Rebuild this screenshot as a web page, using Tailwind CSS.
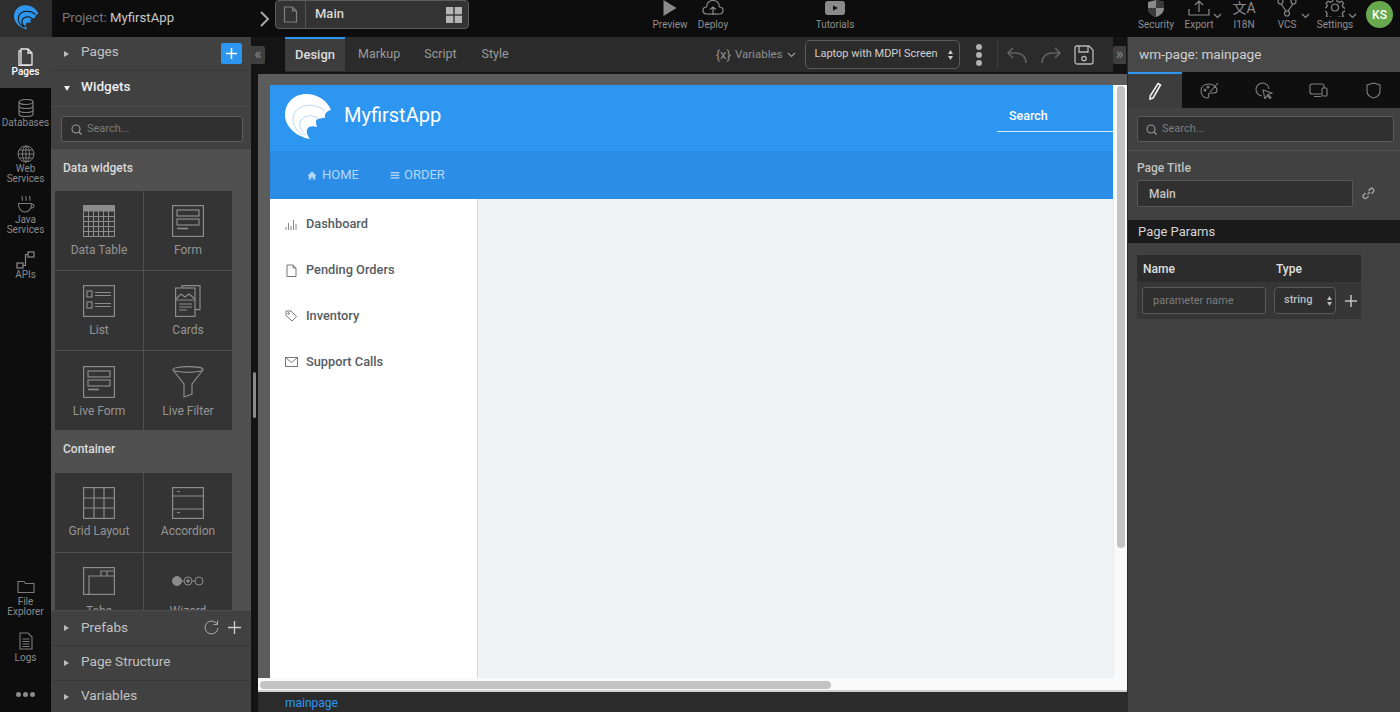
<!DOCTYPE html>
<html>
<head>
    <title>MyfirstApp - Studio</title>
    <script src="https://cdn.jsdelivr.net/npm/@tailwindcss/browser@4"></script>
</head>
<body class="bg-[#0c0c0c] font-['Roboto',sans-serif] overflow-hidden">
<div class="w-[1400px] h-[712px] flex flex-col overflow-hidden">

    <!-- top bar -->
    <header class="h-[37px] shrink-0 flex bg-[#0d0d0d] text-[#8f8f8f]">
        <div class="w-[52px] shrink-0 h-full bg-[#2e2e2e] flex items-center justify-center pb-[3px]">
            <svg width="25" height="25" viewBox="0 0 47 46"><path fill="#2f96ee" d="M46 16C42 6 32 0 21 0 9 0 0 9 0 21c0 12 12 22 25 24-3-4-5-9-1-12 2-1 5-1 8 0-1-4-2-7 1-8 2-1 5-1 7-1-1-3 1-7 6-8z"/><path fill="none" stroke="#0d0d0d" stroke-width="2" d="M40 17C30 8 14 10 9 20c-3 9 2 17 9 21M33 24c-9-5-17-1-18 5-1 5 2 9 6 12"/></svg>
        </div>
        <div class="w-[207px] shrink-0 pl-[10px] flex items-center text-[13.200px] pb-[1px]"><span class="text-[#777]">Project:&nbsp;</span><span class="text-[#c9c9c9]">MyfirstApp</span></div>
        <div class="w-[16px] shrink-0 flex items-center justify-start">
            <svg width="12" height="18" viewBox="0 0 12 18" fill="none" stroke="#a8a8a8" stroke-width="2"><path d="M2 2l7 7-7 7"/></svg>
        </div>
        <div class="w-[194px] shrink-0 h-[29px] flex rounded-[4px] border border-[#5c5c5c] bg-[#333]">
            <div class="w-[30px] border-r border-[#555] flex items-center justify-center">
                <svg width="15" height="17" viewBox="0 0 15 17" fill="none" stroke="#808080" stroke-width="1.200"><path d="M1.500 1h8l4 4v11h-12zM9.500 1v4h4"/></svg>
            </div>
            <div class="flex-1 pl-[9px] flex items-center text-[13px] font-medium text-[#d8d8d8] pb-[2px]">Main</div>
            <div class="w-[28px] flex items-center justify-center">
                <svg width="16" height="16" viewBox="0 0 16 16" fill="#b5b5b5"><rect width="7.300" height="7.300"/><rect x="8.700" width="7.300" height="7.300"/><rect y="8.700" width="7.300" height="7.300"/><rect x="8.700" y="8.700" width="7.300" height="7.300"/></svg>
            </div>
        </div>
        <div class="ml-[179px] w-[44px] shrink-0 flex flex-col items-center text-[10px]">
            <svg width="16" height="17" viewBox="0 0 16 17" fill="#8a8a8a"><path d="M1.500 0l13 8-13 8z"/></svg>
            <span class="mt-[1px] leading-[13px]">Preview</span>
        </div>
        <div class="w-[42px] shrink-0 flex flex-col items-center text-[10px]">
            <svg width="22" height="17" viewBox="0 0 22 17" fill="none" stroke="#8a8a8a" stroke-width="1.200"><path d="M6 14H4.500C2.500 14 1 12.500 1 10.500S2.500 7 4.500 7C5 3 7.500.5 11 .5s6 2.500 6.500 6.500c2 0 3.500 1.500 3.500 3.500S19.500 14 17.500 14H16M11 15V7M8 9.500L11 7l3 2.500"/><path d="M6 14h10"/></svg>
            <span class="mt-[1px] leading-[13px]">Deploy</span>
        </div>
        <div class="ml-[76px] w-[50px] shrink-0 flex flex-col items-center text-[10px]">
            <svg width="20" height="17" viewBox="0 0 20 17"><rect y="1" width="20" height="14" rx="3" fill="#8a8a8a"/><path d="M8 5.500l5 2.500-5 2.500z" fill="#0d0d0d"/></svg>
            <span class="mt-[1px] leading-[13px]">Tutorials</span>
        </div>
        <div class="ml-[275px] w-[42px] shrink-0 flex flex-col items-center text-[10px]">
            <svg width="18" height="17" viewBox="0 0 18 17"><path d="M9 0l8 2v6c0 5-4 7.500-8 9-4-1.500-8-4-8-9V2z" fill="#8a8a8a"/><path d="M9 0v8h8V2zM1 8h8v9c-4-1.500-8-4-8-9z" fill="#3a3a3a"/></svg>
            <span class="mt-[1px] leading-[13px]">Security</span>
        </div>
        <div class="w-[44px] shrink-0 relative flex flex-col items-center text-[10px]">
            <svg width="22" height="17" viewBox="0 0 22 17" fill="none" stroke="#8a8a8a" stroke-width="1.200"><path d="M1 9v6h20V9M11 12V1M7 5l4-4 4 4"/></svg>
            <span class="mt-[1px] leading-[13px]">Export</span>
            <svg class="absolute right-[-1px] top-[13px]" width="9" height="6" viewBox="0 0 9 6" fill="none" stroke="#8a8a8a" stroke-width="1.200"><path d="M1 1l3.500 3.500L8 1"/></svg>
        </div>
        <div class="ml-[2px] w-[42px] shrink-0 flex flex-col items-center text-[10px]">
            <span class="h-[17px] leading-[17px] text-[14px] text-[#8a8a8a] font-['Roboto','Noto_Sans_CJK_SC',sans-serif]">文A</span>
            <span class="mt-[1px] leading-[13px]">I18N</span>
        </div>
        <div class="w-[44px] shrink-0 relative flex flex-col items-center text-[10px]">
            <svg width="20" height="17" viewBox="0 0 20 17" fill="none" stroke="#8a8a8a" stroke-width="1.200"><circle cx="3.500" cy="1.500" r="2.500"/><circle cx="16.500" cy="1.500" r="2.500"/><circle cx="10" cy="13.500" r="2.500"/><path d="M4 4l5 7M16 4l-5 7"/></svg>
            <span class="mt-[1px] leading-[13px]">VCS</span>
            <svg class="absolute right-[-1px] top-[13px]" width="9" height="6" viewBox="0 0 9 6" fill="none" stroke="#8a8a8a" stroke-width="1.200"><path d="M1 1l3.500 3.500L8 1"/></svg>
        </div>
        <div class="ml-[3px] w-[46px] shrink-0 relative flex flex-col items-center text-[10px]">
            <svg width="20" height="17" viewBox="0 0 20 17" fill="none" stroke="#8a8a8a" stroke-width="1.200"><path d="M8.500-1h3l.6 2.400 2.200 1 2.200-1.200 2 2-1.200 2.200 1 2.200 2 .6v3l-2 .6-1 2.200 1 2-2 2-2.200-1-2.200 1-.6 1.500h-3l-.6-1.500-2.200-1-2.200 1-2-2 1-2-1-2.200-2-.6v-3l2-.6 1-2.200-1.200-2.200 2-2 2.200 1.200 2.200-1z"/><circle cx="10" cy="7.500" r="3.500"/></svg>
            <span class="mt-[1px] leading-[13px]">Settings</span>
            <svg class="absolute right-[1px] top-[13px]" width="9" height="6" viewBox="0 0 9 6" fill="none" stroke="#8a8a8a" stroke-width="1.200"><path d="M1 1l3.500 3.500L8 1"/></svg>
        </div>
        <div class="ml-[8px] mt-[1px] w-[27px] shrink-0 h-[27px] rounded-full bg-[#67a94c] text-white text-[12px] font-medium flex items-center justify-center">KS</div>
    </header>

    <div class="flex-1 flex min-h-0">

        <!-- icon rail -->
        <nav class="w-[51px] shrink-0 bg-[#0d0d0d] flex flex-col text-[10px] leading-[10px] text-[#8b8b8b] text-center">
            <div class="h-[51px] bg-[#414141] text-white font-medium flex flex-col items-center pt-[11px]">
                <svg width="17" height="18" viewBox="0 0 17 18" fill="none" stroke="#e8e8e8" stroke-width="1.300"><path d="M4 1h7l4 4v12H4zM11 1v4h4M4 3H2v14.500h11"/></svg>
                <span class="mt-[1px]">Pages</span>
            </div>
            <div class="h-[46px] flex flex-col items-center pt-[11px]">
                <svg width="16" height="18" viewBox="0 0 16 18" fill="none" stroke="#7c7c7c" stroke-width="1.200"><ellipse cx="8" cy="3" rx="7" ry="2.500"/><path d="M1 3v12c0 1.400 3 2.500 7 2.500s7-1.100 7-2.500V3M1 7c0 1.400 3 2.500 7 2.500S15 8.400 15 7M1 11c0 1.400 3 2.500 7 2.500s7-1.100 7-2.500"/></svg>
                <span class="mt-[1px]">Databases</span>
            </div>
            <div class="h-[51px] flex flex-col items-center pt-[11px]">
                <svg width="18" height="18" viewBox="0 0 18 18" fill="none" stroke="#7c7c7c" stroke-width="1"><circle cx="9" cy="9" r="8"/><ellipse cx="9" cy="9" rx="3.500" ry="8"/><path d="M9 1v16M1 9h16M2.200 5h13.600M2.200 13h13.600"/></svg>
                <span class="mt-[1px]">Web<br>Services</span>
            </div>
            <div class="h-[51px] flex flex-col items-center pt-[10px]">
                <svg width="20" height="19" viewBox="0 0 20 20" fill="none" stroke="#7c7c7c" stroke-width="1.100"><path d="M6 1c-1 1.500 1 2.500 0 5M10 1c-1 1.500 1 2.500 0 5M14 1c-1 1.500 1 2.500 0 5M2 9h14c0 5-3 9-7 9s-7-4-7-9zM16 10h1.500c1.500 0 1.500 3.500-2 4"/></svg>
                <span class="mt-[1px]">Java<br>Services</span>
            </div>
            <div class="h-[50px] flex flex-col items-center pt-[15px]">
                <svg width="19" height="19" viewBox="0 0 19 19" fill="none" stroke="#8b8b8b" stroke-width="1.200"><rect x="12" y="1" width="6" height="5" /><rect x="1" y="12" width="6" height="5"/><path d="M12 3.500H9.500v11H7"/></svg>
                <span>APIs</span>
            </div>
            <div class="mt-auto h-[52px] flex flex-col items-center">
                <svg width="18" height="14" viewBox="0 0 18 14" fill="none" stroke="#7c7c7c" stroke-width="1.100"><path d="M1 12.500V1.500h6l1.500 2H17v9z"/></svg>
                <span class="mt-[3px]">File<br>Explorer</span>
            </div>
            <div class="h-[38px] flex flex-col items-center">
                <svg width="14" height="18" viewBox="0 0 14 18" fill="none" stroke="#7c7c7c" stroke-width="1.100"><path d="M1 1h8l4 4v12H1zM3.500 7h7M3.500 9.500h7M3.500 12h7M3.500 14.500h7"/></svg>
                <span class="mt-[3px]">Logs</span>
            </div>
            <div class="h-[42px] flex items-start justify-center gap-[2px] pt-[22px]">
                <span class="w-[5px] h-[5px] rounded-full bg-[#8b8b8b]"></span><span class="w-[5px] h-[5px] rounded-full bg-[#8b8b8b]"></span><span class="w-[5px] h-[5px] rounded-full bg-[#8b8b8b]"></span>
            </div>
        </nav>

        <!-- widgets panel -->
        <aside class="w-[200px] shrink-0 bg-[#414141] flex flex-col text-[#c2c2c2]">
            <div class="h-[34px] shrink-0 flex items-center pl-[13px] pr-[9px] border-b border-[#383838] text-[13.600px]">
                <span class="w-0 h-0 border-y-[3.500px] border-y-transparent border-l-[5px] border-l-[#bdbdbd] mr-[12px]"></span>
                <span class="flex-1 pb-[5px]">Pages</span>
                <span class="w-[21px] h-[21px] rounded-[2px] bg-[#2d96f0] flex items-center justify-center">
                    <svg width="13" height="13" viewBox="0 0 13 13" stroke="#fff" stroke-width="1.500"><path d="M6.500 1v11M1 6.500h11"/></svg>
                </span>
            </div>
            <div class="h-[35px] shrink-0 flex items-center pl-[13px] text-[13.600px] font-medium text-[#eee]">
                <span class="w-0 h-0 border-x-[3.500px] border-x-transparent border-t-[5px] border-t-[#eee] mr-[11px]"></span>
                <span class="pb-[5px]">Widgets</span>
            </div>
            <div class="h-[44px] shrink-0 border-t border-b border-[#4d4d4d] px-[10px] pt-[9px]">
                <div class="h-[26px] w-[182px] rounded-[3px] border border-[#5e5e5e] bg-[#303030] flex items-center pl-[9px] text-[11px] text-[#7d7d7d]">
                    <svg class="mr-[5px]" width="11" height="11" viewBox="0 0 11 11" fill="none" stroke="#9a9a9a" stroke-width="1.100"><circle cx="5" cy="5" r="4"/><path d="M8 8l2.500 2.500"/></svg>
                    Search...
                </div>
            </div>

            <!-- widget list -->
            <div class="flex-1 min-h-0 overflow-hidden bg-[#505050]">
                <div class="h-[41px] pl-[12px] pt-[9px] text-[12px] font-medium text-[#dcdcdc]">Data widgets</div>
                <div class="grid grid-cols-[88px_88px] gap-[1px] pl-[4px] text-[12px] text-[#959595] text-center">
                    <div class="h-[79px] bg-[#343434] flex flex-col items-center pt-[14px]">
                        <svg width="32" height="32" viewBox="0 0 32 32" fill="none" stroke="#8c8c8c" stroke-width="1"><rect x=".5" y=".5" width="31" height="31"/><rect x="0" y="0" width="32" height="6" fill="#8c8c8c"/><path d="M0 11.500h32M0 16.500h32M0 21.500h32M0 26.500h32M5.500 6v26M10.500 6v26M15.500 6v26M20.500 6v26M25.500 6v26"/></svg>
                        <span class="mt-[6px] leading-[14px]">Data Table</span>
                    </div>
                    <div class="h-[79px] bg-[#343434] flex flex-col items-center pt-[14px]">
                        <svg width="32" height="32" viewBox="0 0 32 32" fill="none" stroke="#8c8c8c" stroke-width="1.200"><rect x=".6" y=".6" width="30.800" height="30.800"/><rect x="5" y="5" width="22" height="6"/><rect x="5" y="14" width="22" height="6"/><path d="M5 23.500h11" stroke-width="1.600"/></svg>
                        <span class="mt-[6px] leading-[14px]">Form</span>
                    </div>
                    <div class="h-[79px] bg-[#343434] flex flex-col items-center pt-[14px]">
                        <svg width="32" height="32" viewBox="0 0 32 32" fill="none" stroke="#8c8c8c" stroke-width="1.200"><rect x=".6" y=".6" width="30.800" height="30.800"/><rect x="4" y="6" width="5" height="6"/><rect x="4" y="17" width="5" height="6"/><path d="M12 7.500h16M12 10.500h16M12 18.500h16M12 21.500h16"/></svg>
                        <span class="mt-[6px] leading-[14px]">List</span>
                    </div>
                    <div class="h-[79px] bg-[#343434] flex flex-col items-center pt-[14px]">
                        <svg width="26" height="32" viewBox="0 0 26 32" fill="none" stroke="#8c8c8c" stroke-width="1.200"><path d="M7 3V.6h18v24h-5"/><rect x=".6" y="3" width="19.400" height="28.400"/><path d="M1 14l5-5 4 3 4-3 6 5M1 15h19M4 19h13M4 22h13M4 25h8"/></svg>
                        <span class="mt-[6px] leading-[14px]">Cards</span>
                    </div>
                    <div class="h-[79px] bg-[#343434] flex flex-col items-center pt-[15px]">
                        <svg width="32" height="32" viewBox="0 0 32 32" fill="none" stroke="#8c8c8c" stroke-width="1.200"><rect x=".6" y=".6" width="30.800" height="30.800"/><rect x="5" y="5" width="22" height="6"/><rect x="5" y="14" width="22" height="6"/><path d="M5 23.500h11" stroke-width="1.600"/></svg>
                        <span class="mt-[6px] leading-[14px]">Live Form</span>
                    </div>
                    <div class="h-[79px] bg-[#343434] flex flex-col items-center pt-[15px]">
                        <svg width="32" height="32" viewBox="0 0 32 32" fill="none" stroke="#8c8c8c" stroke-width="1.200"><ellipse cx="16" cy="3.500" rx="15" ry="2.800"/><path d="M1 4l11 14v13l8-3V18L31 4"/></svg>
                        <span class="mt-[6px] leading-[14px]">Live Filter</span>
                    </div>
                </div>
                <div class="h-[43px] pl-[12px] pt-[10px] text-[12px] font-medium text-[#dcdcdc]">Container</div>
                <div class="grid grid-cols-[88px_88px] gap-[1px] pl-[4px] text-[12px] text-[#959595] text-center">
                    <div class="h-[79px] bg-[#343434] flex flex-col items-center pt-[14px]">
                        <svg width="32" height="32" viewBox="0 0 32 32" fill="none" stroke="#8c8c8c" stroke-width="1.200"><rect x=".6" y=".6" width="30.800" height="30.800"/><path d="M0 11h32M0 21h32M11 0v32M21 0v32"/></svg>
                        <span class="mt-[5px] leading-[14px]">Grid Layout</span>
                    </div>
                    <div class="h-[79px] bg-[#343434] flex flex-col items-center pt-[14px]">
                        <svg width="32" height="32" viewBox="0 0 32 32" fill="none" stroke="#8c8c8c" stroke-width="1.200"><rect x=".6" y=".6" width="30.800" height="30.800"/><path d="M0 9h32M0 22h32M5 4.500h3M5 25.500h3"/></svg>
                        <span class="mt-[5px] leading-[14px]">Accordion</span>
                    </div>
                    <div class="h-[79px] bg-[#343434] flex flex-col items-center pt-[14px]">
                        <svg width="32" height="28" viewBox="0 0 32 28" fill="none" stroke="#8c8c8c" stroke-width="1.200"><rect x=".6" y=".6" width="30.800" height="26.800"/><path d="M6 27V9h26M18 9V4h14M24 4v5"/></svg>
                        <span class="mt-[9px] leading-[14px]">Tabs</span>
                    </div>
                    <div class="h-[79px] bg-[#343434] flex flex-col items-center pt-[14px]">
                        <svg class="my-[9px]" width="32" height="10" viewBox="0 0 32 10" fill="none" stroke="#8c8c8c" stroke-width="1"><circle cx="5" cy="5" r="4.500" fill="#8c8c8c"/><circle cx="16" cy="5" r="4"/><circle cx="16" cy="5" r="1.300" fill="#8c8c8c"/><circle cx="27" cy="5" r="4"/><path d="M9.500 5H12M20 5h3"/></svg>
                        <span class="mt-[9px] leading-[14px]">Wizard</span>
                    </div>
                </div>
            </div>

            <div class="h-[35px] shrink-0 flex items-center pl-[13px] pr-[9px] border-t border-[#4d4d4d] text-[13.600px] bg-[#414141]">
                <span class="w-0 h-0 border-y-[3.500px] border-y-transparent border-l-[5px] border-l-[#bdbdbd] mr-[12px]"></span>
                <span class="flex-1 pb-[1px]">Prefabs</span>
                <svg class="mr-[8px] mb-[2px]" width="15" height="15" viewBox="0 0 15 15" fill="none" stroke="#a8a8a8" stroke-width="1"><path d="M13 4A6.500 6.500 0 1 0 14 8M13.500 .5V4.500H9.500"/></svg>
                <svg class="mb-[2px]" width="15" height="15" viewBox="0 0 15 15" stroke="#d0d0d0" stroke-width="1.300"><path d="M7.500 1v13M1 7.500h13"/></svg>
            </div>
            <div class="h-[35px] shrink-0 flex items-center pl-[13px] border-t border-[#383838] text-[13.600px]">
                <span class="w-0 h-0 border-y-[3.500px] border-y-transparent border-l-[5px] border-l-[#bdbdbd] mr-[12px]"></span>
                <span class="pb-[4px]">Page Structure</span>
            </div>
            <div class="h-[32px] shrink-0 flex items-center pl-[13px] border-t border-[#383838] text-[13.600px]">
                <span class="w-0 h-0 border-y-[3.500px] border-y-transparent border-l-[5px] border-l-[#bdbdbd] mr-[12px]"></span>
                <span class="pb-[2px]">Variables</span>
            </div>
        </aside>

        <!-- canvas column -->
        <main class="w-[876px] shrink-0 flex flex-col bg-[#151515]">
            <div class="h-[35px] shrink-0 flex bg-[#2b2b2b]">
                <div class="w-[34px] shrink-0 bg-[#141414] flex items-start">
                    <div class="mt-[9px] w-[14px] h-[18px] bg-[#3f3f3f] rounded-r-[2px] text-[#8a8a8a] text-[16px] leading-[15px] text-center">«</div>
                </div>
                <div class="w-[60px] shrink-0 h-[34px] bg-[#3d3d3d] border-t-2 border-[#2d96f0] text-[13px] font-medium text-[#dedede] flex items-center justify-center">Design</div>
                <div class="ml-[13px] flex items-center text-[12.500px] text-[#9a9a9a]">Markup</div>
                <div class="ml-[24px] flex items-center text-[12.500px] text-[#9a9a9a]">Script</div>
                <div class="ml-[25px] flex items-center text-[12.500px] text-[#9a9a9a]">Style</div>
                <div class="ml-[207px] flex items-center text-[11.500px] text-[#8f8f8f]"><span class="mr-[4px] text-[13px]">{x}</span>Variables
                    <svg class="ml-[5px]" width="9" height="6" viewBox="0 0 9 6" fill="none" stroke="#9a9a9a" stroke-width="1.200"><path d="M1 1l3.500 3.500L8 1"/></svg>
                </div>
                <div class="ml-[9px] mt-[3px] w-[155px] shrink-0 h-[29px] border border-[#5c5c5c] rounded-[5px] flex items-center pl-[8px] pr-[6px] text-[11px] text-[#d0d0d0] justify-between">
                    Laptop with MDPI Screen
                    <svg width="5" height="10" viewBox="0 0 5 10" fill="#c8c8c8"><path d="M2.500 0L5 4H0zM2.500 10L0 6h5z"/></svg>
                </div>
                <div class="ml-[16px] w-[6px] shrink-0 flex flex-col justify-center gap-[2px]">
                    <span class="w-[6px] h-[6px] rounded-full bg-[#b0b0b0]"></span><span class="w-[6px] h-[6px] rounded-full bg-[#b0b0b0]"></span><span class="w-[6px] h-[6px] rounded-full bg-[#b0b0b0]"></span>
                </div>
                <div class="ml-[15px] my-[3px] border-l border-[#3e3e3e] pl-[8px] flex items-center gap-[12px]">
                    <svg width="22" height="18" viewBox="0 0 22 18" fill="none" stroke="#626262" stroke-width="1.600"><path d="M20 17c0-6-4-10-10-10H3M7 2L2 7l5 5"/></svg>
                    <svg width="22" height="18" viewBox="0 0 22 18" fill="none" stroke="#626262" stroke-width="1.600"><path d="M2 17c0-6 4-10 10-10h7M15 2l5 5-5 5"/></svg>
                    <svg width="20" height="20" viewBox="0 0 20 20" fill="none" stroke="#b8b8b8" stroke-width="1.300"><path d="M1 3a2 2 0 0 1 2-2h12l4 4v12a2 2 0 0 1-2 2H3a2 2 0 0 1-2-2zM5 1v6h9V1"/><circle cx="10" cy="13.500" r="2.200"/></svg>
                </div>
                <div class="ml-auto w-[14px] shrink-0 bg-[#141414] flex items-start">
                    <div class="mt-[9px] w-[13px] h-[18px] bg-[#3f3f3f] rounded-l-[2px] text-[#8a8a8a] text-[16px] leading-[15px] text-center">»</div>
                </div>
            </div>

            <div class="flex-1 min-h-0 bg-[#141414] flex">
                <!-- gutter with the panel's scroll thumb -->
                <div class="w-[7px] shrink-0 pt-[300px]">
                    <div class="ml-[2px] w-[3px] h-[46px] rounded-full bg-[#8a8a8a]"></div>
                </div>
                <div class="flex-1 min-w-0 pt-[2px] flex flex-col">
                    <div class="flex-1 min-h-0 bg-[#5c5c5c] pt-[11px] pl-[12px] flex">
                        <div class="flex-1 flex flex-col min-w-0 bg-white">
                            <div class="flex-1 min-h-0 flex">
                                <div class="flex-1 flex flex-col min-w-0">
                                    <!-- app header -->
                                    <div class="h-[66px] bg-[#2d96f0] flex items-center pl-[15px]">
                                        <svg class="mb-[3px]" width="47" height="46" viewBox="0 0 47 46"><path fill="#fff" d="M46 16C42 6 32 0 21 0 9 0 0 9 0 21c0 12 12 22 25 24-3-4-5-9-1-12 2-1 5-1 8 0-1-4-2-7 1-8 2-1 5-1 7-1-1-3 1-7 6-8z"/><path fill="none" stroke="#b5d9f9" stroke-width="1" d="M40 17C30 8 14 10 9 20c-3 9 2 17 9 21M33 24c-9-5-17-1-18 5-1 5 2 9 6 12"/></svg>
                                        <span class="ml-[12px] pb-[6px] text-[20px] text-white">MyfirstApp</span>
                                        <div class="ml-auto w-[116px] h-[33px] border-b border-white/80 flex items-center pl-[12px] pt-[2px] text-[12.500px] font-medium text-white self-end mb-[19px]">Search</div>
                                    </div>
                                    <div class="h-[48px] bg-[#2b8de6] flex items-center pl-[37px] text-[13px] text-[#b4d8fb]">
                                        <svg class="mr-[5px]" width="10" height="9" viewBox="0 0 12 11" fill="#b4d8fb"><path d="M6 .5L.5 5.500H2V10.500h3V7.500h2v3h3V5.500h1.500z"/></svg>
                                        <span>HOME</span>
                                        <svg class="ml-[31px] mr-[4px]" width="10" height="7" viewBox="0 0 10 8" fill="#b4d8fb"><rect width="10" height="1.500"/><rect y="3" width="10" height="1.500"/><rect y="6" width="10" height="1.500"/></svg>
                                        <span>ORDER</span>
                                    </div>
                                    <!-- app body -->
                                    <div class="flex-1 min-h-0 flex">
                                        <div class="w-[208px] shrink-0 border-r border-[#d6d6d6] bg-white pt-[2px] text-[12.800px] font-medium text-[#555c64]">
                                            <div class="h-[46px] flex items-center pl-[15px]">
                                                <svg class="mr-[9px]" width="12" height="11" viewBox="0 0 12 11" stroke="#8a8a8a" stroke-width="1"><path d="M1 11V8M3.500 11V4M6 11V7M8.500 11V1M11 11V5"/></svg>
                                                Dashboard
                                            </div>
                                            <div class="h-[46px] flex items-center pl-[16px]">
                                                <svg class="mr-[9px]" width="11" height="13" viewBox="0 0 11 13" fill="none" stroke="#777" stroke-width="1"><path d="M1 1h6l3 3v8.500H1zM7 1v3h3"/></svg>
                                                Pending Orders
                                            </div>
                                            <div class="h-[46px] flex items-center pl-[15px]">
                                                <svg class="mr-[9px]" width="12" height="12" viewBox="0 0 12 12" fill="none" stroke="#777" stroke-width="1"><path d="M1 1h5l5.500 5.500-4.500 4.500L1 5.500z"/><circle cx="3.700" cy="3.500" r=".8"/></svg>
                                                Inventory
                                            </div>
                                            <div class="h-[46px] flex items-center pl-[15px]">
                                                <svg class="mr-[8px]" width="13" height="10" viewBox="0 0 13 10" fill="none" stroke="#777" stroke-width="1"><rect x=".5" y=".5" width="12" height="9"/><path d="M.5 .5l6 5 6-5"/></svg>
                                                Support Calls
                                            </div>
                                        </div>
                                        <div class="flex-1 bg-[#f0f1f3]"></div>
                                    </div>
                                </div>
                                <!-- vertical scrollbar -->
                                <div class="w-[14px] shrink-0 bg-[#fafafa] border-l border-[#ececec] pt-[1px] pl-[3px]">
                                    <div class="w-[8px] h-[462px] rounded-full bg-[#c3c3c3]"></div>
                                </div>
                            </div>
                            <div class="h-[14px] shrink-0 bg-[#fafafa] border-b-2 border-[#d0d0d0] -ml-[12px] pl-[2px] pt-[3px]">
                                <div class="w-[571px] h-[8px] rounded-full bg-[#c3c3c3]"></div>
                            </div>
                        </div>
                    </div>
                    <div class="h-[20px] shrink-0 bg-[#2b2b2b] pl-[27px] text-[12px] leading-[22px] text-[#2d96f0]">mainpage</div>
                </div>
            </div>
        </main>

        <!-- properties panel -->
        <aside class="flex-1 bg-[#414141] border-l border-[#2a2a2a] flex flex-col text-[#c8c8c8]">
            <div class="h-[35px] shrink-0 bg-[#484848] pl-[11px] flex items-center text-[13.600px] text-[#d0d0d0]">wm-page: mainpage</div>
            <div class="h-[36px] shrink-0 bg-[#0f0f0f] flex">
                <div class="w-[54px] bg-[#3d3d3d] border-t-2 border-[#2d96f0] flex items-center justify-center">
                    <svg width="14" height="18" viewBox="0 0 14 18" fill="none" stroke="#efefef" stroke-width="1.600"><path d="M10 1.500l2.500 1.500L5 16l-3 1 .3-3.200z"/></svg>
                </div>
                <div class="w-[55px] flex items-center justify-center">
                    <svg width="19" height="17" viewBox="0 0 19 17" fill="none" stroke="#808080" stroke-width="1.100"><path d="M9 2C4 2 1 5 1 9s3 7 6 7c2 0 2-2 1.500-3S9 11 11 11h3c2 0 3-1.500 3-3 0-3-4-6-8-6zM10 10l8-9"/><circle cx="5" cy="8" r="1"/><circle cx="8" cy="5" r="1"/></svg>
                </div>
                <div class="w-[54px] flex items-center justify-center">
                    <svg width="18" height="17" viewBox="0 0 18 17" fill="none" stroke="#808080" stroke-width="1.100"><path d="M7 14A6.500 6.500 0 1 1 14 7"/><path d="M8 8l9 3-4 1.500 3 3-1 1-3-3L10 17z"/></svg>
                </div>
                <div class="w-[55px] flex items-center justify-center">
                    <svg width="19" height="14" viewBox="0 0 19 14" fill="none" stroke="#808080" stroke-width="1.100"><path d="M12 11H3a2 2 0 0 1-2-2V3a2 2 0 0 1 2-2h10a2 2 0 0 1 2 2v2M5 13.500h7"/><rect x="13" y="5" width="5" height="8" rx="1"/></svg>
                </div>
                <div class="w-[55px] flex items-center justify-center">
                    <svg width="15" height="17" viewBox="0 0 15 17" fill="none" stroke="#808080" stroke-width="1.100"><path d="M7.500 1l6.500 2v6c0 3.500-3 6-6.500 7C4 15 1 12.500 1 9V3z"/></svg>
                </div>
            </div>
            <div class="h-[43px] shrink-0 border-b border-[#555] pl-[9px] pr-[7px] pt-[8px]">
                <div class="h-[26px] rounded-[3px] border border-[#5a5a5a] bg-[#303030] flex items-center pl-[8px] pt-[1px] text-[11px] text-[#7d7d7d]">
                    <svg class="mr-[5px]" width="11" height="11" viewBox="0 0 11 11" fill="none" stroke="#9a9a9a" stroke-width="1.100"><circle cx="5" cy="5" r="4"/><path d="M8 8l2.500 2.500"/></svg>
                    Search...
                </div>
            </div>
            <div class="pl-[9px] pt-[10px] text-[12px] leading-[14px] font-medium text-[#c0c0c0]">Page Title</div>
            <div class="pl-[9px] mt-[5px] flex items-center">
                <div class="w-[216px] h-[27px] rounded-[2px] border border-[#575757] bg-[#303030] pl-[11px] flex items-center text-[12px] font-medium text-[#c4c4c4]">Main</div>
                <svg class="ml-[9px]" width="13" height="13" viewBox="0 0 13 13" fill="none" stroke="#a8a8a8" stroke-width="1.300"><path d="M5.500 7.500L8 5M3.500 6L1.800 7.700a2 2 0 0 0 3 3.200L6.500 9.200M6.500 3.800l1.700-1.800a2 2 0 0 1 3 3L9.500 6.700"/></svg>
            </div>
            <div class="mt-[13px] h-[23px] bg-[#1a1a1a] pl-[10px] flex items-center text-[13px] text-[#d4d4d4]">Page Params</div>
            <div class="ml-[9px] mt-[12px] w-[224px] bg-[#363636]">
                <div class="h-[27px] bg-[#2c2c2c] flex items-center text-[12px] font-medium text-[#e0e0e0]">
                    <span class="w-[139px] pl-[6px]">Name</span><span>Type</span>
                </div>
                <div class="h-[37px] flex items-center pl-[5px]">
                    <div class="w-[124px] h-[27px] rounded-[3px] border border-[#595959] bg-[#2f2f2f] pl-[10px] pt-[1px] flex items-center text-[11px] text-[#7d7d7d]">parameter name</div>
                    <div class="ml-[8px] w-[62px] h-[27px] rounded-[4px] border border-[#595959] bg-[#2f2f2f] pl-[9px] pr-[3px] flex items-center justify-between text-[11px] font-medium text-[#bdbdbd]">string
                        <svg width="5" height="10" viewBox="0 0 5 10" fill="#bdbdbd"><path d="M2.500 0L5 4H0zM2.500 10L0 6h5z"/></svg>
                    </div>
                    <svg class="ml-[9px]" width="12" height="12" viewBox="0 0 12 12" stroke="#c4c4c4" stroke-width="1.500"><path d="M6 0v12M0 6h12"/></svg>
                </div>
            </div>
        </aside>
    </div>
</div>
</body>
</html>
